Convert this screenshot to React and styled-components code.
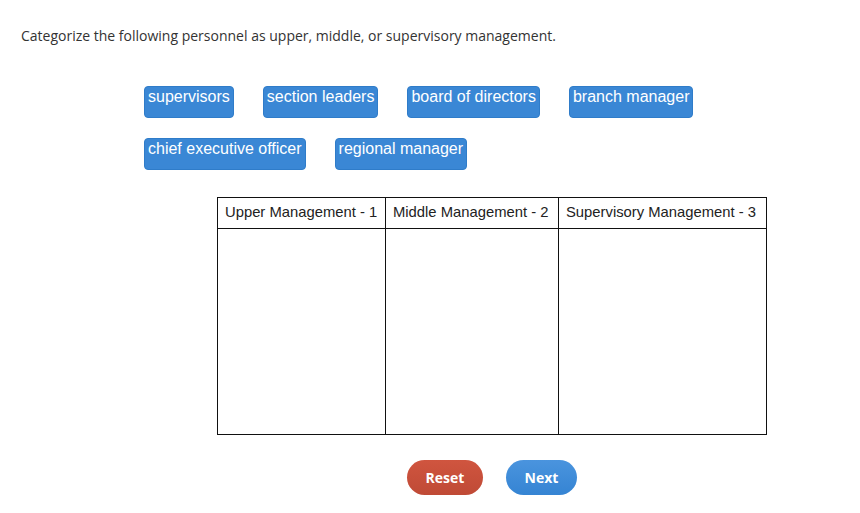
import React from "react";
import styled, { createGlobalStyle } from "styled-components";

const Global = createGlobalStyle`
  html, body { margin: 0; padding: 0; background: #fff; }
  body { font-family: "Open Sans", "Liberation Sans", sans-serif; }
`;

const Page = styled.div`
  position: relative;
  width: 860px;
  height: 513px;
  overflow: hidden;
`;

const Prompt = styled.p`
  margin: 0;
  padding: 26px 0 0 21px;
  font-size: 14px;
  line-height: 20px;
  color: #333;
`;

const Bank = styled.div`
  display: flex;
  flex-wrap: wrap;
  column-gap: 29px;
  row-gap: 20px;
  width: 600px;
  margin: 40px 0 0 144px;
`;

const Chip = styled.div`
  box-sizing: border-box;
  height: 32px;
  padding: 1px 3px 0 3px;
  background: #3a87d5;
  border: 1px solid #2f7cc9;
  border-radius: 4px;
  color: #fff;
  font-family: "Liberation Sans", Arial, sans-serif;
  font-size: 16px;
  line-height: 18px;
  white-space: nowrap;
`;

const Table = styled.div`
  display: grid;
  grid-template-columns: 167px 173px 1fr;
  grid-template-rows: 31px 1fr;
  box-sizing: border-box;
  width: 550px;
  height: 238px;
  margin: 27px 0 0 217px;
  border: 1px solid #111;
`;

const HeadCell = styled.div`
  display: flex;
  align-items: center;
  padding-left: 7px;
  padding-bottom: 2px;
  border-left: ${(p) => (p.$first ? "none" : "1px solid #111")};
  border-bottom: 1px solid #111;
  font-family: "Liberation Sans", Arial, sans-serif;
  font-size: 14.8px;
  color: #222;
  white-space: nowrap;
`;

const DropCell = styled.div`
  border-left: ${(p) => (p.$first ? "none" : "1px solid #111")};
`;

const Actions = styled.div`
  display: flex;
  gap: 23px;
  margin: 25px 0 0 407px;
`;

const Btn = styled.button`
  box-sizing: border-box;
  width: ${(p) => p.$w}px;
  height: 35px;
  border: none;
  border-radius: 18px;
  background: ${(p) => p.$bg};
  color: #fff;
  font-family: "Open Sans", sans-serif;
  font-weight: 700;
  font-size: 14px;
  padding: 0;
`;

const items = ["supervisors", "section leaders", "board of directors", "branch manager", "chief executive officer", "regional manager"];
const heads = ["Upper Management - 1", "Middle Management - 2", "Supervisory Management - 3"];

export default function App() {
  return (
    <Page>
      <Global />
      <Prompt>Categorize the following personnel as upper, middle, or supervisory management.</Prompt>
      <Bank>
        {items.map((t) => (
          <Chip key={t}>{t}</Chip>
        ))}
      </Bank>
      <Table>
        {heads.map((h, i) => (
          <HeadCell key={h} $first={i === 0}>{h}</HeadCell>
        ))}
        {heads.map((h, i) => (
          <DropCell key={h} $first={i === 0} />
        ))}
      </Table>
      <Actions>
        <Btn $w={76} $bg="linear-gradient(#d0553f, #bf4a36)">Reset</Btn>
        <Btn $w={71} $bg="linear-gradient(#4a94de, #3584d3)">Next</Btn>
      </Actions>
    </Page>
  );
}
